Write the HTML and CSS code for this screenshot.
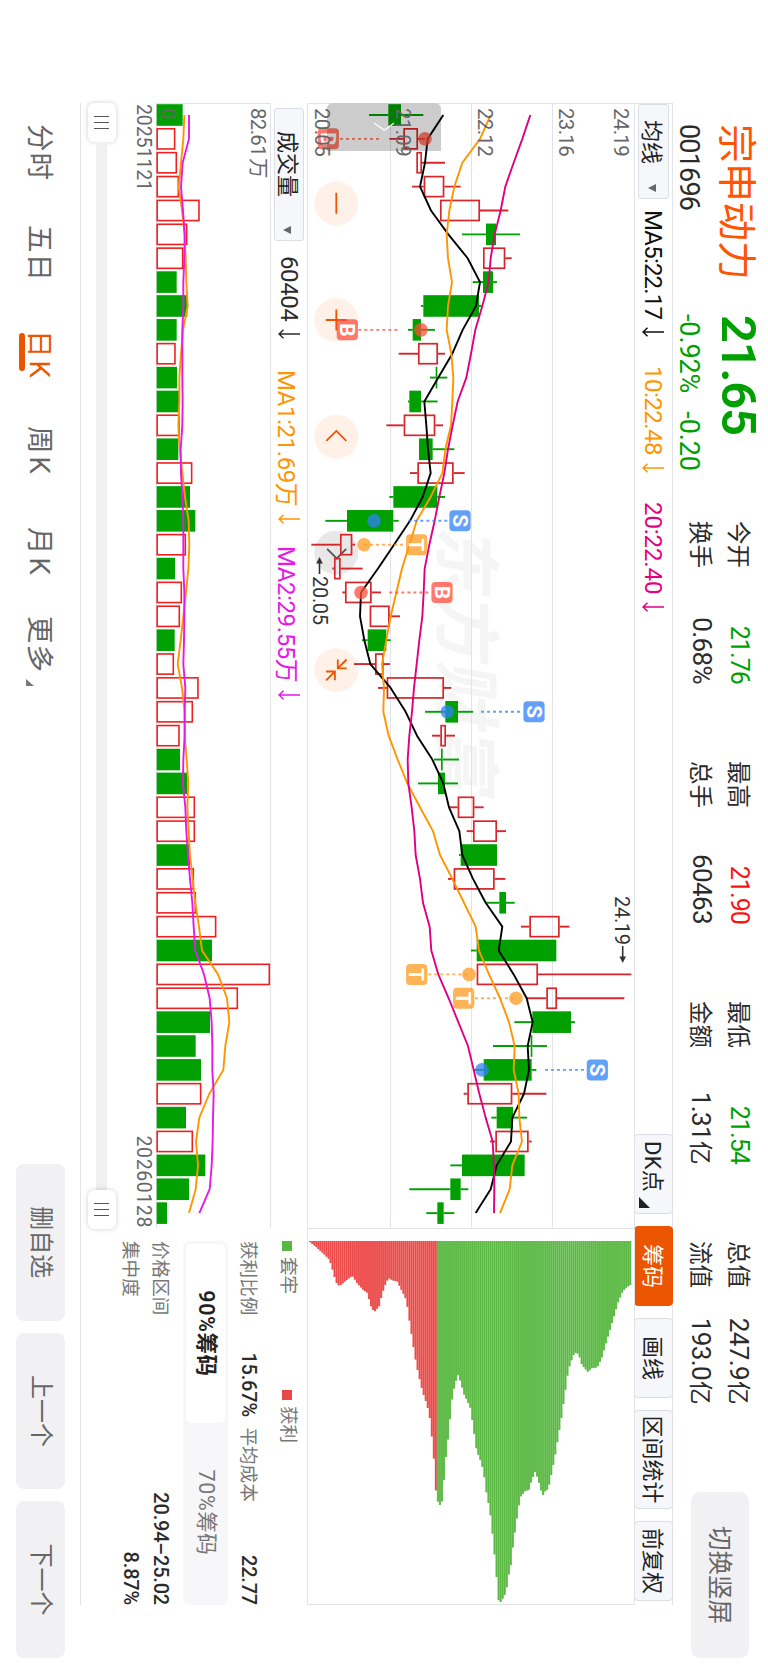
FILE: index.html
```html
<!DOCTYPE html>
<html lang="zh-CN">
<head>
<meta charset="utf-8">
<title>宗申动力 001696</title>
<link rel="stylesheet" href="styles.css">
</head>
<body>
<div class="viewport">
<div class="stage">
  <header class="quote">
    <div class="ident"><div class="name">宗申动力</div><div class="code">001696</div></div>
    <div class="price"><div class="last">21.65</div><div class="change"><span>-0.92%</span><span>-0.20</span></div></div>
    <div class="stats">
      <div class="stat"><span>今开</span><b class="down">21.76</b></div>
      <div class="stat"><span>最高</span><b class="up">21.90</b></div>
      <div class="stat"><span>最低</span><b class="down">21.54</b></div>
      <div class="stat"><span>总值</span><b>247.9<i>亿</i></b></div>
      <div class="stat"><span>换手</span><b>0.68%</b></div>
      <div class="stat"><span>总手</span><b>60463</b></div>
      <div class="stat"><span>金额</span><b>1.31<i>亿</i></b></div>
      <div class="stat"><span>流值</span><b>193.0<i>亿</i></b></div>
    </div>
    <div class="switch">切换竖屏</div>
  </header>

  <main class="board">
    <div class="toolbar">
      <div class="picker">均线<i class="caret"></i></div>
      <div class="ma ma5">MA5:22.17<svg class="arr" viewBox="0 0 10 22"><path d="M5 0V21M.8 16.5L5 21L9.2 16.5"/></svg></div>
      <div class="ma ma10">10:22.48<svg class="arr" viewBox="0 0 10 22"><path d="M5 0V21M.8 16.5L5 21L9.2 16.5"/></svg></div>
      <div class="ma ma20">20:22.40<svg class="arr" viewBox="0 0 10 22"><path d="M5 0V21M.8 16.5L5 21L9.2 16.5"/></svg></div>
      <div class="tools">
        <div class="tool dk">DK点<i class="corner"></i></div>
        <div class="tool on">筹码</div>
        <div class="tool w80">画线</div>
        <div class="tool w99">区间统计</div>
        <div class="tool w80 last-tool">前复权</div>
      </div>
    </div>

    <div class="charts">
      <div class="kline">
        <div class="watermark">东方财富</div>
        <svg id="kline" class="plot" viewBox="103 133 1126 328"></svg>
      </div>
      <div class="chips"><svg id="chips" class="plot" viewBox="1229 133 376 328"></svg></div>
    </div>

    <div class="lower">
      <div class="volume">
        <div class="volbar">
          <div class="picker big">成交量<i class="caret"></i></div>
          <div class="ma v0">60404<svg class="arr" viewBox="0 0 10 22"><path d="M5 0V21M.8 16.5L5 21L9.2 16.5"/></svg></div>
          <div class="ma v1">MA1:21.69万<svg class="arr" viewBox="0 0 10 22"><path d="M5 0V21M.8 16.5L5 21L9.2 16.5"/></svg></div>
          <div class="ma v2">MA2:29.55万<svg class="arr" viewBox="0 0 10 22"><path d="M5 0V21M.8 16.5L5 21L9.2 16.5"/></svg></div>
        </div>
        <div class="volplot"><svg id="volume" class="plot" viewBox="103 497 1126 115"></svg></div>
        <div class="dates"><span class="from">20251121</span><span>20260128</span></div>
        <div class="slider">
          <div class="handle"><i></i><i></i><i></i></div>
          <div class="track"></div>
          <div class="handle"><i></i><i></i><i></i></div>
        </div>
      </div>
      <div class="info">
        <div class="legend"><span><i class="sq g"></i>套牢</span><span><i class="sq r"></i>获利</span></div>
        <div class="row ratio"><span>获利比例</span><b>15.67%</b><span>平均成本</span><b>22.77</b></div>
        <div class="seg"><div class="seg-on">90%筹码</div><div class="seg-off">70%筹码</div></div>
        <div class="row"><span>价格区间</span><b>20.94–25.02</b></div>
        <div class="row"><span>集中度</span><b>8.87%</b></div>
      </div>
    </div>
  </main>

  <footer class="footer">
    <nav class="tabs">
      <span>分时</span><span>五日</span><span class="sel">日K</span><span>周K</span><span>月K</span><span>更多<i class="corner"></i></span>
    </nav>
    <div class="actions"><div>删自选</div><div>上一个</div><div>下一个</div></div>
  </footer>
</div>
</div>
<script src="chart.js"></script>
</body>
</html>
```
FILE: styles.css
```css
* { box-sizing: border-box; }
body { margin: 0; background: #fff; }
i { font-style: normal; }
b { font-weight: 400; }
.viewport { width: 768px; height: 1670px; overflow: hidden; }
.stage {
  width: 1670px; height: 768px;
  transform-origin: 0 0; transform: translateX(768px) rotate(90deg);
  display: flex; flex-direction: column;
  font-family: Roboto, "Noto Sans CJK SC", sans-serif;
  color: #2b2b2b; white-space: nowrap;
}

/* quote header */
.quote { height: 95px; display: flex; padding-left: 124px; flex: none; }
.ident { width: 191px; }
.name { font-size: 39px; line-height: 38px; color: #ff5500; margin-top: 13px; }
.code { font-size: 27px; line-height: 30px; margin-top: 13px; letter-spacing: -0.8px; }
.price { width: 206px; color: #00a000; }
.last { font-size: 49px; line-height: 50px; font-weight: 600; margin-top: 5px; letter-spacing: -1.2px; }
.change { font-size: 27px; line-height: 30px; margin-top: 9px; letter-spacing: -0.1px; display: flex; gap: 18px; margin-left: -1px; }
.stats { display: grid; grid-template-columns: repeat(4, 163px); column-gap: 77px; grid-template-rows: 38px 38px; margin-top: 9px; width: 882px; flex: none; }
.stat { display: flex; justify-content: space-between; align-items: center; font-size: 23.5px; }
.stat b { font-size: 26px; letter-spacing: -0.6px; }
.stat b.up, .stat b.down { font-size: 25px; letter-spacing: -0.9px; }
.stat b i { font-size: 23.5px; margin-left: 1px; }
.up { color: #fa1414; }
.down { color: #00a000; }
.switch { margin: 19px 0 0 89px; width: 166px; height: 58px; border-radius: 9px; background: #f1f1f3; color: #666; font-size: 24.5px; line-height: 59px; text-align: center; flex: none; }

/* board */
.board { margin-left: 103px; width: 1502px; height: 593px; border-top: 1px solid #e2e2e9; flex: none; border-bottom: 1px solid #e2e2e9; }
.toolbar { height: 37px; display: flex; align-items: center; border-left: 1px solid #e2e2e9; }
.picker { display: flex; align-items: center; justify-content: space-between; width: 95px; height: 31px; padding: 0 6px 2px 15px; background: #f6f7fa; border: 1px solid #dcdee6; border-radius: 3px; font-size: 22px; color: #222; flex: none; }
.picker.big { width: 133px; height: 30px; margin-left: 5px; padding: 0 6px 2px 22px; }
.caret { border: 4px solid transparent; border-top: 8px solid #666; border-bottom: 0; margin-top: 5px; }
.ma { display: flex; align-items: center; font-size: 24px; letter-spacing: -0.8px; flex: none; }
.arr { width: 10px; height: 22px; margin-left: 8px; fill: none; stroke: currentColor; stroke-width: 1.5; }
.ma5 { margin-left: 11px; width: 156px; color: #111; }
.ma10 { width: 136px; color: #ff9500; letter-spacing: -0.5px; }
.ma20 { color: #e6007e; letter-spacing: -0.1px; }
.tools { margin-left: auto; display: flex; height: 39px; gap: 12px; }
.tool { position: relative; display: flex; align-items: center; justify-content: center; width: 80px; padding-bottom: 3px; border: 1px solid #dcdee6; border-radius: 4px; background: #f6f7fa; font-size: 22px; color: #222; }
.tool.dk { justify-content: flex-start; padding-left: 6px; letter-spacing: 0.3px; }
.tool.on { background: #eb5500; border-color: #eb5500; color: #fff; }
.tool.w99 { width: 99px; }
.last-tool { margin-right: 4px; }
.corner { display: inline-block; width: 11px; height: 11px; background: #222; clip-path: polygon(100% 0, 100% 100%, 0 100%); }
.tool .corner { position: absolute; right: 5px; bottom: 4px; }

.charts { display: flex; height: 328px; }
.kline { position: relative; width: 1126px; }
.chips { width: 376px; }
.plot { display: block; width: 100%; height: 100%; position: relative; }
.watermark { position: absolute; left: 428px; top: 131px; font-size: 67px; line-height: 66px; font-weight: 700; transform: skewX(-10deg); color: #f5f5f6; font-family: "Noto Sans CJK SC", sans-serif; }

/* lower panes */
.lower { display: flex; height: 226px; }
.volume { width: 1126px; }
.volbar { height: 36px; display: flex; align-items: center; }
.volbar .ma { letter-spacing: -0.4px; }
.v0 { margin-left: 15px; width: 114px; }
.v1 { width: 176px; color: #ff9500; }
.v2 { color: #e619e6; }
.volplot { height: 115px; }
.dates { display: flex; justify-content: space-between; padding: 0 1px; height: 26px; font-size: 19.5px; line-height: 25px; color: #666; letter-spacing: 0.6px; }
.dates .from { letter-spacing: -0.1px; }
.slider { margin-top: 14px; height: 28px; display: flex; align-items: center; }
.track { flex: 1; height: 11px; background: #f0f0f2; }
.handle { width: 39px; height: 28px; border-radius: 6px; background: #fff; box-shadow: 0 0 5px rgba(0,0,0,.2); display: flex; align-items: center; justify-content: center; gap: 4.5px; }
.handle i { width: 1.6px; height: 15px; background: #555; }

.info { width: 364px; margin-left: 12px; color: #777; font-size: 18.6px; }
.info b { color: #2b2b2b; font-weight: 500; font-size: 20px; letter-spacing: -0.2px; }
.legend { display: flex; height: 22px; margin-top: 9px; align-items: center; line-height: 20px; }
.legend span { width: 149px; height: 20px; margin-top: -3px; display: flex; align-items: center; gap: 6px; }
.sq { width: 10px; height: 10px; margin-top: 2px; }
.g { background: #58b83f; }
.r { background: #ea4747; }
.row { display: flex; justify-content: space-between; align-items: center; height: 30px; }
.row span { margin-top: -4px; }
.ratio { margin: 12px 0 6px; justify-content: flex-start; }
.ratio b { width: 64px; margin: 0 11px 0 37px; text-align: right; }
.ratio b:last-child { margin: 0 0 0 auto; }
.seg { height: 45px; background: #f7f7fa; border-radius: 6px; display: flex; padding: 3px; font-size: 21.5px; letter-spacing: 0.6px; margin-bottom: 7px; line-height: 38px; text-align: center; }
.seg-on { width: 179px; background: #fff; border-radius: 5px; color: #222; font-weight: 600; }
.seg-off { flex: 1; }

/* footer */
.footer { display: flex; flex: 1; }
.tabs { width: 1164px; padding-left: 124px; display: flex; font-size: 27.5px; letter-spacing: 1px; color: #666; line-height: 82px; }
.tabs span { width: 101px; position: relative; }
.tabs span:nth-child(2) { width: 105px; }
.tabs span:nth-child(3) { width: 96px; letter-spacing: 3px; }
.tabs span:nth-child(4) { letter-spacing: 3px; }
.tabs span:nth-child(5) { width: 89px; letter-spacing: 3px; }
.tabs .sel { color: #eb5500; }
.tabs .sel::after { content: ""; position: absolute; left: 3px; top: 55px; width: 38px; height: 6px; border-radius: 3px; background: #eb5500; }
.tabs .corner { width: 7px; height: 8px; background: #777; position: absolute; left: 63px; top: 46px; }
.actions { display: flex; gap: 12px; padding-top: 15px; }
.actions div { width: 156.6px; height: 49px; border-radius: 8px; background: #f1f1f3; color: #666; font-size: 24px; line-height: 49px; text-align: center; }

/* chart marks */
.frame { stroke: #e2e2e9; stroke-width: 1; fill: none; }
.axis { font-size: 20.5px; fill: #666; letter-spacing: -0.7px; }
.note { font-size: 20px; fill: #333; letter-spacing: -0.3px; }
.ink { fill: none; stroke: #333; stroke-width: 1.6; }
.tip { fill: #333; }
.cg { fill: #00a000; }
.cr { fill: none; stroke: #d5262b; stroke-width: 1.7; }
.wg { stroke: #00a000; stroke-width: 1.9; }
.wr { stroke: #d5262b; stroke-width: 1.9; }
.vr { fill: none; stroke: #f02020; stroke-width: 1.6; }
.line { fill: none; stroke-width: 1.9; stroke-linejoin: round; }
.black { stroke: #000; }
.orange { stroke: #ff9500; }
.pink { stroke: #e0007f; }
.magenta { stroke: #e619e6; }
.B { fill: #ff4d38; stroke: #ff4d38; }
.S { fill: #2f80f8; stroke: #2f80f8; }
.T { fill: #ff9a1f; stroke: #ff9a1f; }
.badge { stroke: none; fill-opacity: .75; }
.dotline { stroke-dasharray: 3 3; stroke-width: 1.9; stroke-opacity: .75; }
.letter { fill: #fff; font-size: 21px; font-weight: 700; text-anchor: middle; }
.knob { fill: #fff0e8; }
.knob.off { fill: #e8e8e8; }
.icon { fill: none; stroke: #eb5500; stroke-width: 1.8; }
.icon.off { stroke: #555; }
.scrim { fill: #000; fill-opacity: .2; }
.chev { fill: none; stroke: #fff; stroke-width: 1.3; }
.loss { fill: #5cb845; }
.gain { fill: #eb4a4a; }
.lossbg { fill: #75c661; }
.gainbg { fill: #f06c6a; }
```
FILE: chart.js
```javascript
var STEP = 23.872, X0 = 115, HALF = 10.8;
function x(i) { return X0 + i * STEP; }
function y(level) { return 468 - level / 3; }
function vy(level) { return 768 - level / 3; }

// colour, low, body low, body high, high
var candles = [
['g',207,265,303,370],['r',268,310,354,375],['r',349,349,366,435],['r',336,371,433,482],['r',420,420,540,625],
['g',486,558,588,660],['r',549,549,616,635],['g',518,549,579,591],['g',363,370,537,545],['g',324,338,363,405],
['r',296,354,414,435],['g',390,407,412,442],['g',324,328,363,413],['r',259,311,406,429],['g',357,357,398,463],
['r',330,352,461,494],['g',268,280,412,435],['g',76,141,280,296],['r',34,120,157,165],['r',97,102,122,188],
['r',127,135,215,243],['r',209,209,269,300],['g',186,203,259,272],['r',162,225,251,270],['r',234,260,432,454],
['g',375,436,474,519],['r',396,421,438,465],['g',402,423,428,477],['g',354,414,435,474],['r',447,473,523,551],
['r',500,519,591,618],['g',477,482,591,591],['r',444,461,584,616],['g',557,598,618,644],['r',663,688,779,808],
['g',513,530,769,769],['r',530,530,714,994],['r',680,739,771,973],['g',643,697,813,825],['g',579,692,697,741],
['g',520,551,695,709],['r',491,502,637,739],['g',574,590,639,681],['r',570,586,686,695],['g',451,486,674,674],
['g',328,451,482,505],['g',379,412,431,463]];
var ma5 = [430,383,375,360,393,445,503,540,528,488,457,415,373,379,384,392,368,330,282,234,183,180,193,211,272,317,351,397,430,447,478,487,519,557,607,596,641,680,698,683,687,672,637,633,590,572,527];
var ma10 = [572,540,487,463,448,440,444,456,444,440,454,460,457,453,436,427,392,350,328,306,289,272,259,246,252,250,266,293,322,360,399,420,457,492,527,537,567,600,627,644,641,656,658,666,637,629,600];
var ma20 = [691,667,641,616,602,584,572,566,547,526,513,499,473,458,444,433,418,404,388,374,371,367,358,350,342,336,328,323,325,335,343,347,360,369,389,394,415,446,475,504,521,538,557,578,582,583,582];
var vols = [548,526,531,537,599,562,550,530,562,530,527,531,537,539,535,577,570,586,558,525,546,540,524,522,596,579,539,540,562,585,585,570,582,588,649,636,810,714,630,587,603,604,558,579,616,567,501];
var volDown = [0,7,8,9,11,12,14,16,17,19,22,27,28,31,35,38,39,40,42,44,45,46];
var vma1 = [553,550,543,536,546,554,557,559,563,549,543,538,538,535,539,547,555,566,568,565,558,550,542,533,546,554,554,560,565,562,566,570,578,586,597,606,654,681,688,676,670,628,598,588,594,587,567];
var vma2 = [567,567,548,543,549,554,553,550,550,547,547,547,548,547,542,543,547,550,550,550,553,553,552,550,556,554,554,550,549,556,559,564,570,577,581,586,612,629,635,637,637,641,639,638,635,629,598];
// candle index, letter, badge level, dot level, dotted line from, to
var signals = [[1,'B',85,375,120,245],[9,'B',142,363,175,300],[17,'S',480,222,325,447],[18,'T',350,192,192,318],
[20,'B',426,183,268,393],[25,'S',702,442,543,669],[36,'T',350,507,385,507],[37,'T',491,648,525,648],[40,'S',892,546,735,860]];
// price level, depth
var shape = [[28,34],[50,52],[72,72],[88,88],[95,108],[103,138],[112,165],[120,167],[140,150],[157,137],[172,160],[190,180],[202,188],[215,235],[224,245],[238,228],[247,190],[258,158],[266,144],[278,151],[292,154],[300,170],[310,190],[320,212],[330,280],[345,378],[355,430],[368,485],[378,515],[388,550],[393,597],[398,640],[402,690],[407,776],[412,810],[418,825],[425,824],[432,750],[438,682],[444,630],[450,570],[456,510],[464,467],[474,434],[482,455],[492,492],[502,512],[512,535],[520,590],[530,660],[545,700],[552,730],[560,790],[570,840],[580,930],[588,1018],[596,1110],[598,1122],[606,1110],[618,1087],[626,1035],[632,1010],[640,940],[650,870],[656,830],[662,800],[678,780],[686,783],[694,755],[705,725],[714,745],[722,775],[728,798],[738,780],[745,778],[755,730],[765,680],[775,620],[785,560],[795,490],[805,420],[815,390],[824,367],[836,372],[846,405],[864,426],[876,414],[892,412],[905,385],[918,340],[930,300],[942,260],[955,215],[968,185],[980,172],[994,163]];

function rect(c, l, t, w, h, extra) { return '<rect class="' + c + '" x="' + l + '" y="' + t + '" width="' + w + '" height="' + h + '" ' + (extra || '') + '/>'; }
function seg(c, x1, y1, x2, y2) { return '<line class="' + c + '" x1="' + x1 + '" y1="' + y1 + '" x2="' + x2 + '" y2="' + y2 + '"/>'; }
function label(c, l, t, s) { return '<text class="' + c + '" x="' + l + '" y="' + t + '">' + s + '</text>'; }
function path(c, d) { return '<path class="' + c + '" d="' + d + '"/>'; }
function poly(c, data, f) {
  return '<polyline class="line ' + c + '" points="' + data.map(function (v, i) { return x(i) + ',' + f(v); }).join(' ') + '"/>';
}

var k = '';
[215.5, 296.5, 377.5].forEach(function (g) { k += seg('frame', 103, g, 1228, g); });
k += path('frame', 'M1228.5 133.5H103.5V460.5H1228.5Z');
[203.3, 320, 436.7, 552.7, 670].forEach(function (u, i) {
  k += '<circle class="knob' + (i === 3 ? ' off' : '') + '" cx="' + u + '" cy="431.7" r="22"/>';
});
k += path('icon', 'M192.8 431.7h21M309.5 431.7h21M320 421.2v21M440.9 421.7l-10 10l10 10');
k += path('icon off', 'M548.9 421.7l9.6 9.6l-9.6 9.6');
k += path('icon', 'M659.5 421.4L668.3 430.2M659.5 430.2H668.3V421.4M680.3 441.9L671.5 433.1M680.3 433.1H671.5V441.9');
candles.forEach(function (c, i) {
  var r = c[0] === 'r';
  k += seg(r ? 'wr' : 'wg', x(i), y(c[1]), x(i), y(c[2]));
  k += seg(r ? 'wr' : 'wg', x(i), y(c[3]), x(i), y(c[4]));
  if (r) k += rect('cr', x(i) - 10, y(c[3]) + .8, 20, (c[3] - c[2]) / 3 - 1.6);
  else k += rect('cg', x(i) - HALF, y(c[3]), HALF * 2, (c[3] - c[2]) / 3);
});
k += poly('black', ma5, y) + poly('orange', ma10, y) + poly('pink', ma20, y);
signals.forEach(function (s) {
  var u = x(s[0]), by = y(s[2]);
  k += seg(s[1] + ' dotline', u, y(s[4]), u, y(s[5]));
  k += '<circle class="' + s[1] + ' badge" cx="' + u + '" cy="' + y(s[3]) + '" r="6.8"/>';
  k += rect(s[1] + ' badge', u - 10.5, by - 10.6, 21, 21.2, 'rx="4"');
  k += label('letter', u, by + 7.5, s[1]);
});
k += path('scrim', 'M151 327H108.5a5 5 0 0 0-5 5V436a5 5 0 0 0 5 5H151Z');
k += path('chev', 'M123 374l7.3 9.6l-7.3 10.4');
[['24.19', 154.3], ['23.16', 208.9], ['22.12', 290.3], ['21.09', 371.8], ['20.05', 453]].forEach(function (a) { k += label('axis', 108, a[1], a[0]); });
k += label('note', 576, 455.5, '20.05') + path('ink', 'M574 448.5h-12') + path('tip', 'M557 448.5l6.5-3.3v6.6z');
k += label('note', 896, 152.8, '24.19') + path('ink', 'M946 145.3h12') + path('tip', 'M963 145.3l-6.5-3.3v6.6z');
document.getElementById('kline').innerHTML = k;

var v = path('frame', 'M1228.5 497.5H103.5V611.5H1228.5');
vols.forEach(function (t, i) {
  var h = (t - 470) / 3;
  if (volDown.indexOf(i) < 0) v += rect('vr', x(i) - 10.1, vy(t) + .7, 20.2, h - 1.2);
  else v += rect('cg', x(i) - HALF, vy(t), HALF * 2, h);
});
v += poly('orange', vma1, vy) + poly('magenta', vma2, vy);
v += label('axis', 108, 517, '82.61<tspan dx="2">万</tspan>') + label('axis', 108, 607, '0');
document.getElementById('volume').innerHTML = v;

var q = path('frame', 'M1229 133.5H1604.5V460.5H1229');
var N = 159, W = 966 / N;
for (var n = 0; n < N; n++) {
  var lo = 28 + n * W, mid = lo + W / 2, j = 0;
  while (shape[j + 1][0] < mid && j < shape.length - 2) j++;
  var a = shape[j], b = shape[j + 1];
  var d = a[1] + (b[1] - a[1]) * (mid - a[0]) / (b[0] - a[0]);
  var kind = mid < 408 ? 'gain' : 'loss';
  q += rect(kind + 'bg', 1241, y(lo + W), (d - 33) / 3, W / 3 + .1);
  q += rect(kind, 1241, y(lo + W) + .4, (d - 33) / 3, W / 3 - .6);
}
document.getElementById('chips').innerHTML = q;
```
